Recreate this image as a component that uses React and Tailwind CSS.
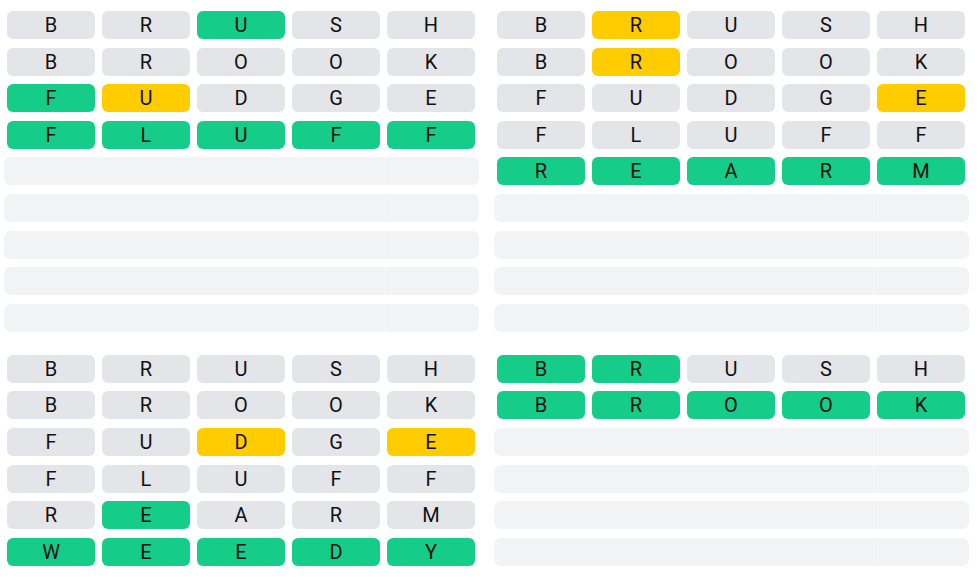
import React from 'react';

const COLORS = {
  g: 'bg-[#15cc88]',
  y: 'bg-[#ffcc00]',
  n: 'bg-[#e4e5e9]',
};

const boards = [
  {
    rows: [
      ['BRUSH', 'nngnn'],
      ['BROOK', 'nnnnn'],
      ['FUDGE', 'gynnn'],
      ['FLUFF', 'ggggg'],
    ],
    total: 9,
  },
  {
    rows: [
      ['BRUSH', 'nynnn'],
      ['BROOK', 'nynnn'],
      ['FUDGE', 'nnnny'],
      ['FLUFF', 'nnnnn'],
      ['REARM', 'ggggg'],
    ],
    total: 9,
  },
  {
    rows: [
      ['BRUSH', 'nnnnn'],
      ['BROOK', 'nnnnn'],
      ['FUDGE', 'nnyny'],
      ['FLUFF', 'nnnnn'],
      ['REARM', 'ngnnn'],
      ['WEEDY', 'ggggg'],
    ],
    total: 6,
  },
  {
    rows: [
      ['BRUSH', 'ggnnn'],
      ['BROOK', 'ggggg'],
    ],
    total: 6,
  },
];

const Tile = ({ letter, state }) => (
  <div
    className={`w-[88px] h-[28px] rounded-md flex items-center justify-center text-[20px] text-[#111] ${COLORS[state]}`}
  >
    {letter}
  </div>
);

const EmptyRow = () => (
  <div className="h-[28px] rounded-[7px] bg-[#f2f3f5] flex overflow-hidden">
    <div className="flex-1" />
    <div className="w-[95px] border-l border-[#f6f7f8]" />
  </div>
);

const Board = ({ rows, total }) => {
  const empties = total - rows.length;
  return (
    <div className="w-[475px] flex flex-col gap-[8.6px]">
      {rows.map(([word, states], i) => (
        <div key={i} className="flex gap-[7px] px-[3px]">
          {word.split('').map((ch, j) => (
            <Tile key={j} letter={ch} state={states[j]} />
          ))}
        </div>
      ))}
      {Array.from({ length: empties }).map((_, i) => (
        <EmptyRow key={'e' + i} />
      ))}
    </div>
  );
};

export default function App() {
  return (
    <div
      className="w-[980px] h-[582px] bg-white pl-[4px] pt-[11px]"
      style={{ fontFamily: 'Roboto, "Liberation Sans", sans-serif' }}
    >
      <div className="grid grid-cols-[475px_475px] gap-x-[15px] gap-y-[23px] items-start">
        {boards.map((b, i) => (
          <Board key={i} rows={b.rows} total={b.total} />
        ))}
      </div>
    </div>
  );
}
